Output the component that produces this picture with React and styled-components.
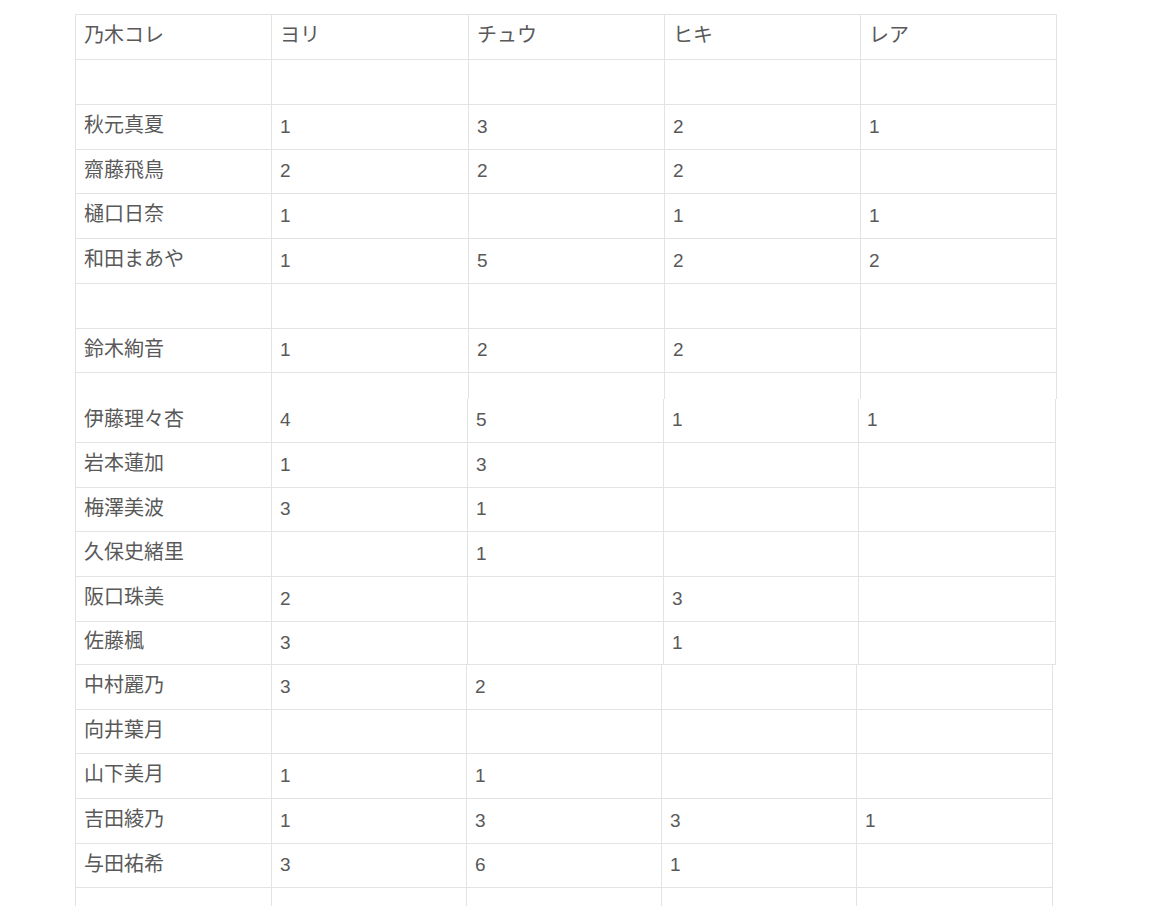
import React from "react";
import styled, { createGlobalStyle } from "styled-components";

const GlobalStyle = createGlobalStyle`
  html, body {
    margin: 0;
    padding: 0;
    background: #ffffff;
    overflow: hidden;
  }
`;

const Page = styled.div`
  padding: 14px 0 0 75px;
  height: 906px;
  box-sizing: border-box;
  font-family: "Liberation Sans", "Noto Sans CJK JP", sans-serif;
  color: #595959;
`;

const Segment = styled.div`
  display: flex;
  flex-direction: column;
  width: max-content;
  border-left: 1px solid #e3e3e3;
  border-top: ${(p) => (p.$top ? "1px solid #e3e3e3" : "none")};
`;

const Row = styled.div`
  display: grid;
  grid-template-columns: ${(p) => p.$cols};
  height: ${(p) => p.$h}px;
  box-sizing: border-box;
`;

const Cell = styled.div`
  display: flex;
  align-items: center;
  padding: 0 0 ${(p) => (p.$num ? "1px" : "4px")} 8px;
  font-size: ${(p) => (p.$num ? "19px" : "20px")};
  line-height: 22px;
  border-right: 1px solid #e3e3e3;
  border-bottom: ${(p) => (p.$open ? "none" : "1px solid #e3e3e3")};
  white-space: nowrap;
  overflow: hidden;
`;

const blank = ["", "", "", "", ""];

const segments = [
  {
    top: true,
    cols: "196px 197px 196px 196px 196px",
    rows: [
      [45, ["乃木コレ", "ヨリ", "チュウ", "ヒキ", "レア"]],
      [45, blank],
      [45, ["秋元真夏", "1", "3", "2", "1"]],
      [44, ["齋藤飛鳥", "2", "2", "2", ""]],
      [45, ["樋口日奈", "1", "", "1", "1"]],
      [45, ["和田まあや", "1", "5", "2", "2"]],
      [45, blank],
      [44, ["鈴木絢音", "1", "2", "2", ""]],
      [26, blank],
    ],
  },
  {
    cols: "196px 196px 196px 195px 197px",
    rows: [
      [44, ["伊藤理々杏", "4", "5", "1", "1"]],
      [45, ["岩本蓮加", "1", "3", "", ""]],
      [44, ["梅澤美波", "3", "1", "", ""]],
      [45, ["久保史緒里", "", "1", "", ""]],
      [45, ["阪口珠美", "2", "", "3", ""]],
      [43, ["佐藤楓", "3", "", "1", ""]],
    ],
  },
  {
    cols: "196px 195px 195px 195px 196px",
    rows: [
      [45, ["中村麗乃", "3", "2", "", ""]],
      [44, ["向井葉月", "", "", "", ""]],
      [45, ["山下美月", "1", "1", "", ""]],
      [45, ["吉田綾乃", "1", "3", "3", "1"]],
      [44, ["与田祐希", "3", "6", "1", ""]],
      [40, blank],
    ],
  },
];

const isNum = (s) => /^[0-9]+$/.test(s);

const App = () => {
  return (
    <React.Fragment>
      <GlobalStyle />
      <Page>
        {segments.map((seg, si) => (
          <Segment key={si} $top={seg.top}>
            {seg.rows.map(([h, cells], ri) => (
              <Row key={ri} $cols={seg.cols} $h={h}>
                {cells.map((c, ci) => (
                  <Cell
                    key={ci}
                    $num={isNum(c)}
                    $open={si === 0 && ri === seg.rows.length - 1}
                  >
                    {c}
                  </Cell>
                ))}
              </Row>
            ))}
          </Segment>
        ))}
      </Page>
    </React.Fragment>
  );
};

export default App;
